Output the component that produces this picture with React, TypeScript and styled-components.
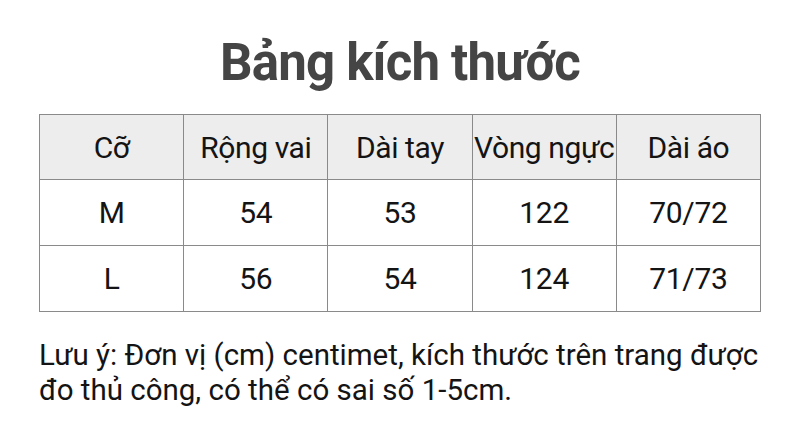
import styled, { createGlobalStyle } from "styled-components";

const GlobalStyle = createGlobalStyle`
    body {
        margin: 0;
        background: #ffffff;
        font-family: Roboto, "Noto Sans", sans-serif;
    }
`;

const headers = ["Cỡ", "Rộng vai", "Dài tay", "Vòng ngực", "Dài áo"];
const rows = [
    ["M", "54", "53", "122", "70/72"],
    ["L", "56", "54", "124", "71/73"],
];

export default function App() {
    return (
        <Page>
            <GlobalStyle />
            <Title>Bảng kích thước</Title>
            <SizeTable>
                <thead>
                    <tr>
                        {headers.map((h) => (
                            <HeadCell key={h}>{h}</HeadCell>
                        ))}
                    </tr>
                </thead>
                <tbody>
                    {rows.map((row) => (
                        <tr key={row[0]}>
                            {row.map((v, i) => (
                                <Cell key={i}>{v}</Cell>
                            ))}
                        </tr>
                    ))}
                </tbody>
            </SizeTable>
            <Note>
                Lưu ý: Đơn vị (cm) centimet, kích thước trên trang được
                <br />
                đo thủ công, có thể có sai số 1-5cm.
            </Note>
        </Page>
    );
}

const Page = styled.div`
    width: 800px;
    height: 436px;
    box-sizing: border-box;
    padding: 32px 39px 0 39px;
    display: flex;
    flex-direction: column;
    align-items: center;
`;

const Title = styled.h1`
    margin: 0 0 20px 0;
    font-size: 51px;
    font-weight: 700;
    line-height: 62px;
    letter-spacing: -0.8px;
    color: #454545;
`;

const SizeTable = styled.table`
    width: 722px;
    border-collapse: collapse;
    table-layout: fixed;
    border: 1px solid #8a8a8a;
`;

const HeadCell = styled.th`
    height: 64px;
    padding: 0;
    background: #ededed;
    border: 1px solid #8a8a8a;
    font-size: 30px;
    font-weight: 400;
    letter-spacing: -0.4px;
    color: #141414;
    text-align: center;
`;

const Cell = styled.td`
    height: 65px;
    padding: 0;
    border: 1px solid #8a8a8a;
    font-size: 30px;
    letter-spacing: -0.3px;
    color: #141414;
    text-align: center;
`;

const Note = styled.p`
    align-self: stretch;
    margin: 26px 0 0 0;
    font-size: 29.5px;
    line-height: 35px;
    color: #141414;
`;
